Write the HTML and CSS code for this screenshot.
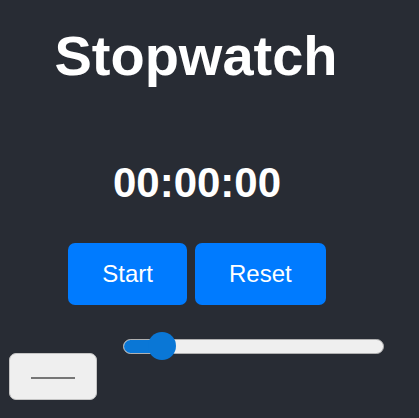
FILE: index.html
```html
<!DOCTYPE html>
<html>
<head>
<meta charset="utf-8">
<link rel="stylesheet" href="styles.css">
</head>
<body>
<div class="app">
  <h1 class="title">Stopwatch</h1>
  <div class="time">00:00:00</div>
  <div class="buttons">
    <button class="btn">Start</button>
    <button class="btn">Reset</button>
  </div>
  <div class="controls">
    <div class="color-input"><span class="swatch"></span></div>
    <div class="slider">
      <div class="track"><div class="fill"></div></div>
      <div class="thumb"></div>
    </div>
  </div>
</div>
</body>
</html>
```
FILE: styles.css
```css
html, body {
  margin: 0;
  padding: 0;
  background: #282c34;
  height: 100%;
}
body {
  font-family: "Liberation Sans", Arial, sans-serif;
  color: #ffffff;
}
.app {
  width: 392px;
  text-align: center;
}
.title {
  margin: 0;
  padding-top: 24px;
  font-size: 56px;
  font-weight: bold;
  line-height: 64px;
}
.time {
  margin-top: 71px;
  padding-left: 2px;
  font-size: 42px;
  font-weight: bold;
  line-height: 48px;
}
.buttons {
  display: flex;
  justify-content: center;
  gap: 8px;
  margin-top: 36px;
  padding-left: 2px;
}
.btn {
  font-family: "Liberation Sans", Arial, sans-serif;
  font-size: 24px;
  line-height: 28px;
  color: #ffffff;
  background: #007bff;
  border: none;
  border-radius: 7px;
  padding: 17px 34px;
  margin: 0;
}
.controls {
  display: flex;
  align-items: flex-start;
}
.color-input {
  box-sizing: border-box;
  width: 88px;
  height: 47px;
  margin-left: 9px;
  margin-top: 48px;
  background: #efefef;
  border: 1px solid #c4c4c4;
  border-radius: 7px;
  display: flex;
  align-items: center;
  justify-content: center;
}
.swatch {
  display: block;
  width: 44px;
  height: 2px;
  background: #767676;
  margin-top: 2px;
}
.slider {
  position: relative;
  width: 261px;
  height: 28px;
  margin-left: 26px;
  margin-top: 27px;
  display: flex;
  align-items: center;
}
.track {
  box-sizing: border-box;
  width: 100%;
  height: 15px;
  margin-top: 1px;
  border-radius: 8px;
  background: #efefef;
  border: 1px solid #b0b0b0;
  overflow: hidden;
}
.fill {
  width: 40px;
  height: 100%;
  background: #0a77d6;
}
.thumb {
  position: absolute;
  left: 25px;
  top: 0;
  width: 28px;
  height: 28px;
  border-radius: 50%;
  background: #0a77d6;
}
```
